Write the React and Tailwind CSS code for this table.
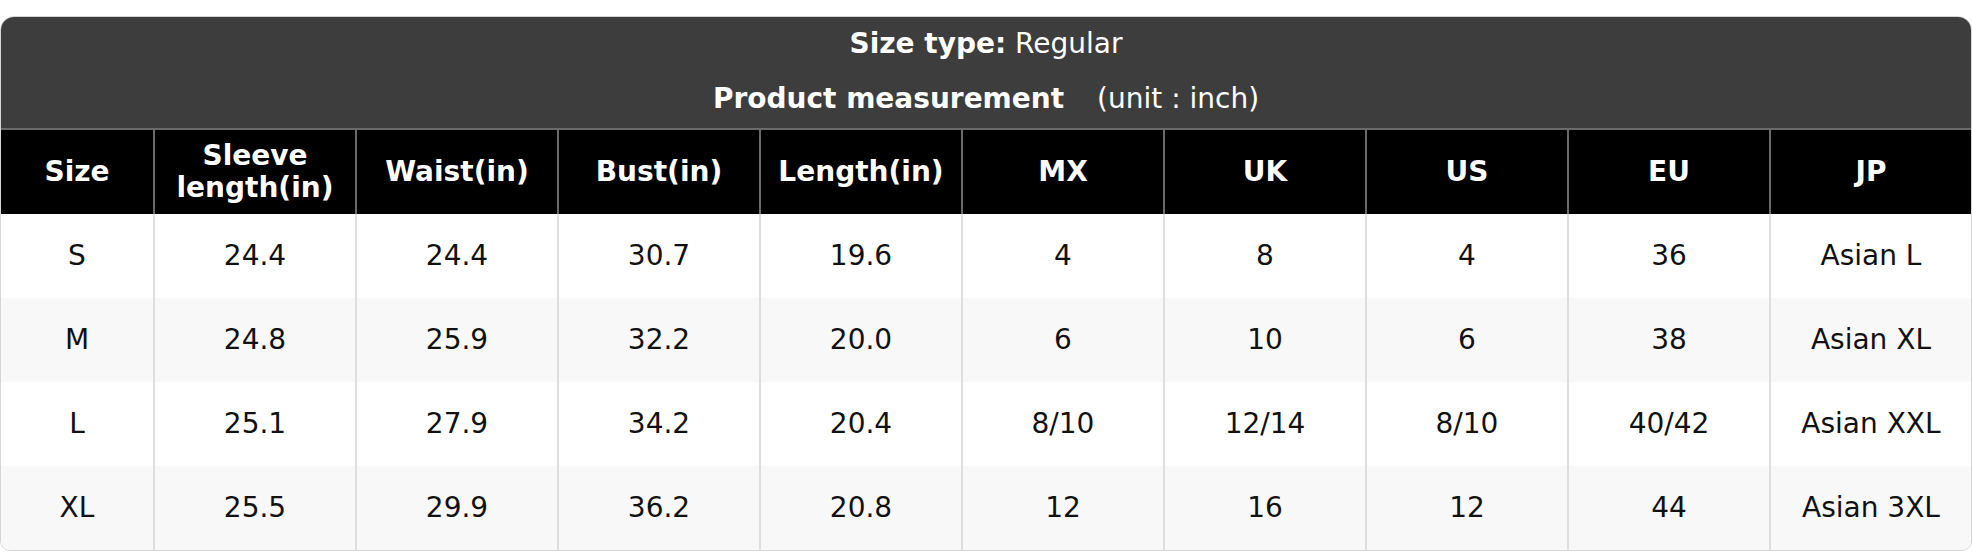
import React from "react";

const headers = ["Size", "Sleeve\nlength(in)", "Waist(in)", "Bust(in)", "Length(in)", "MX", "UK", "US", "EU", "JP"];
const rows = [
  ["S", "24.4", "24.4", "30.7", "19.6", "4", "8", "4", "36", "Asian L"],
  ["M", "24.8", "25.9", "32.2", "20.0", "6", "10", "6", "38", "Asian XL"],
  ["L", "25.1", "27.9", "34.2", "20.4", "8/10", "12/14", "8/10", "40/42", "Asian XXL"],
  ["XL", "25.5", "29.9", "36.2", "20.8", "12", "16", "12", "44", "Asian 3XL"],
];

export default function App() {
  return (
    <div className="w-[1972px] h-[552px] bg-white pt-4 font-['DejaVu_Sans',sans-serif]">
      <div className="border border-[#d6d6d6] rounded-t-[14px] rounded-b-[10px] overflow-hidden">
        <div className="bg-[#3d3d3d] text-white text-[28px]">
          <div className="h-[53px] flex items-center justify-center">
            <span className="font-bold">Size type:</span>
            <span>&nbsp;Regular</span>
          </div>
          <div className="h-[58px] flex items-center justify-center">
            <span className="font-bold">Product measurement</span>
            <span className="ml-[33px]">(unit : inch)</span>
          </div>
        </div>
        <div className="border-t-2 border-[#6a6a6a] grid grid-cols-[152px_repeat(9,1fr)] bg-black h-[86px]">
          {headers.map((h, i) => (
            <div
              key={i}
              className={
                "flex items-center justify-center text-center text-white font-bold text-[28px] leading-[32px]" +
                (i > 0 ? " border-l-2 border-[#6a6a6a]" : "")
              }
            >
              {h.includes("\n") ? (
                <span>
                  {h.split("\n")[0]}
                  <br />
                  {h.split("\n")[1]}
                </span>
              ) : (
                h
              )}
            </div>
          ))}
        </div>
        {rows.map((r, ri) => (
          <div
            key={ri}
            className={
              "grid grid-cols-[152px_repeat(9,1fr)] h-[84px] " + (ri % 2 === 1 ? "bg-[#f8f8f8]" : "bg-white")
            }
          >
            {r.map((c, ci) => (
              <div
                key={ci}
                className={
                  "flex items-center justify-center text-[28px] text-[#111]" +
                  (ci > 0 ? " border-l-2 border-[#dedede]" : "")
                }
              >
                {c}
              </div>
            ))}
          </div>
        ))}
      </div>
    </div>
  );
}
